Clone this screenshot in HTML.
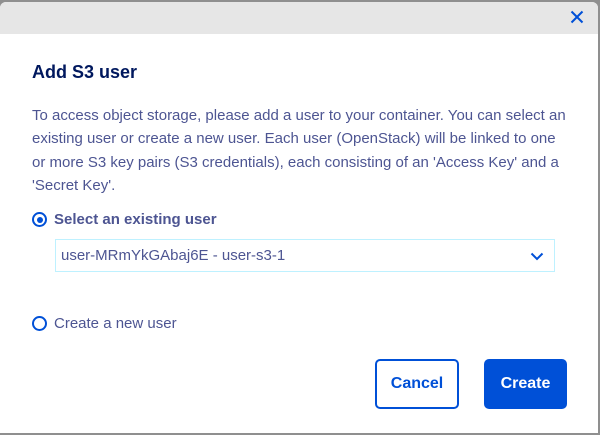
<!DOCTYPE html>
<html><head><style>
body{margin:0;width:600px;height:435px;background:#8f8f8f;font-family:"Liberation Sans",sans-serif;position:relative;overflow:hidden}
.m{position:absolute;left:0;top:2px;width:598px;height:431px;background:#fff;border-radius:6px 6px 0 0;overflow:hidden}
.h{height:32px;background:#e6e6e6;position:relative}
.x{position:absolute;right:14px;top:8px}
.t{position:absolute;left:32px;top:60px;font-size:18px;font-weight:bold;color:#00185e}
.p{position:absolute;left:32px;top:102px;font-size:15px;line-height:23.4px;color:#4d5592;white-space:nowrap;letter-spacing:0px}
.r{position:absolute;width:11px;height:11px;border:2px solid #0050d7;border-radius:50%}
.r i{position:absolute;left:2.5px;top:2.5px;width:6px;height:6px;border-radius:50%;background:#0050d7}
.l{position:absolute;font-size:15px;color:#4d5592}
.s{position:absolute;left:55px;top:237px;width:493px;height:31px;border:1px solid #bef1ff;font-size:15px;color:#4d5592;line-height:31px;padding-left:5px}
.b{position:absolute;top:357px;height:50px;border-radius:5px;font-size:16px;font-weight:bold;display:flex;align-items:center;justify-content:center;box-sizing:border-box}
</style></head><body>
<div class="m">
<div class="h"><svg class="x" width="14" height="14" viewBox="0 0 14 14"><path d="M1.5 1.5L12.5 12.5M12.5 1.5L1.5 12.5" stroke="#0050d7" stroke-width="2" fill="none"/></svg></div>
<div class="t">Add S3 user</div>
<div class="p">To access object storage, please add a user to your container. You can select an<br>existing user or create a new user. Each user (OpenStack) will be linked to one<br>or more S3 key pairs (S3 credentials), each consisting of an 'Access Key' and a<br>'Secret Key'.</div>
<div class="r" style="left:32px;top:210px"><i></i></div>
<div class="l" style="left:54px;top:209px;font-weight:bold">Select an existing user</div>
<div class="s">user-MRmYkGAbaj6E - user-s3-1
<svg style="position:absolute;right:10px;top:12px" width="14" height="9" viewBox="0 0 14 9"><path d="M1.5 1.5L7 7L12.5 1.5" stroke="#0050d7" stroke-width="2" fill="none"/></svg></div>
<div class="r" style="left:32px;top:314px"></div>
<div class="l" style="left:54px;top:313px">Create a new user</div>
<div class="b" style="left:375px;width:84px;border:2px solid #0050d7;color:#0050d7">Cancel</div>
<div class="b" style="left:484px;width:83px;background:#0050d7;color:#fff">Create</div>
</div>
</body></html>
